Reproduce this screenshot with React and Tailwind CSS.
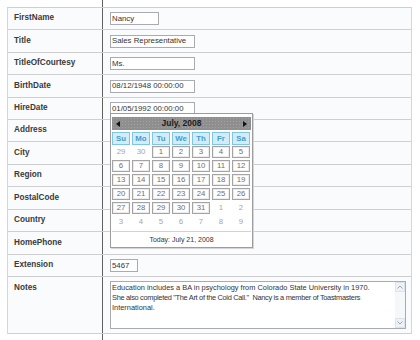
import React from "react";

const rows = [
  { label: "FirstName", h: "h-[22px]", input: "Nancy", w: "w-[49px]" },
  { label: "Title", h: "h-[23px]", input: "Sales Representative", w: "w-[85px]" },
  { label: "TitleOfCourtesy", h: "h-[22px]", input: "Ms.", w: "w-[85px]" },
  { label: "BirthDate", h: "h-[23px]", input: "08/12/1948 00:00:00", w: "w-[85px]" },
  { label: "HireDate", h: "h-[22px]", input: "01/05/1992 00:00:00", w: "w-[85px]" },
  { label: "Address", h: "h-[22px]" },
  { label: "City", h: "h-[23px]" },
  { label: "Region", h: "h-[22px]" },
  { label: "PostalCode", h: "h-[23px]" },
  { label: "Country", h: "h-[22px]" },
  { label: "HomePhone", h: "h-[23px]" },
  { label: "Extension", h: "h-[22px]", input: "5467", w: "w-[28px]" },
];

const weeks = [
  [[29, 0], [30, 0], [1, 1], [2, 1], [3, 1], [4, 1], [5, 1]],
  [[6, 1], [7, 1], [8, 1], [9, 1], [10, 1], [11, 1], [12, 1]],
  [[13, 1], [14, 1], [15, 1], [16, 1], [17, 1], [18, 1], [19, 1]],
  [[20, 1], [21, 1], [22, 1], [23, 1], [24, 1], [25, 1], [26, 1]],
  [[27, 1], [28, 1], [29, 1], [30, 1], [31, 1], [1, 0], [2, 0]],
  [[3, 0], [4, 0], [5, 0], [6, 0], [7, 0], [8, 0], [9, 0]],
];

const dayNames = ["Su", "Mo", "Tu", "We", "Th", "Fr", "Sa"];

function Calendar() {
  return (
    <div className="absolute left-[110px] top-[113px] w-[143px] h-[135px] bg-white border border-[#9c9c9c] shadow-[1px_1px_0_#d6d6d6] pt-[3px] px-[1px] flex flex-col">
      <div className="h-[13px] bg-[#8f8f8f] bg-[radial-gradient(#a3a3a3_0.6px,transparent_0.7px)] bg-[length:3px_3px] flex items-center justify-between px-[4px]">
        <svg width="4" height="6" viewBox="0 0 4 6"><path d="M4 0 L0 3 L4 6 Z" fill="#111" /></svg>
        <span className="text-[8.5px] font-bold text-[#1c1c1c] leading-none">July, 2008</span>
        <svg width="4" height="6" viewBox="0 0 4 6"><path d="M0 0 L4 3 L0 6 Z" fill="#111" /></svg>
      </div>
      <div className="mt-[2px] grid grid-cols-[repeat(7,18px)] gap-x-[2px]">
        {dayNames.map((d) => (
          <div key={d} className="h-[13px] bg-[#d3ecf8] border border-[#7fc5e6] flex items-center justify-center text-[7.8px] font-bold text-[#3f9fcf] leading-none">
            {d}
          </div>
        ))}
      </div>
      <div className="mt-[1px] grid grid-cols-[repeat(7,18px)] gap-x-[2px] gap-y-[2px]">
        {weeks.flat().map(([n, cur], i) => (
          <div
            key={i}
            className={
              cur
                ? "h-[12px] border border-[#a4a4a4] shadow-[inset_0_0_0_1px_#ececec] flex items-center justify-center text-[7.8px] text-[#707070] leading-none"
                : "h-[12px] flex items-center justify-center text-[7.8px] text-[#a6a6a6] leading-none"
            }
          >
            {n}
          </div>
        ))}
      </div>
      <div className="mt-[3px] border-t border-[#d2d2d2] flex-1 flex items-center justify-center text-[7px] text-[#333] leading-none">
        Today: July 21, 2008
      </div>
    </div>
  );
}

function Input({ value, w }) {
  return (
    <div className={`${w} h-[13px] bg-white border border-[#a9abb0] flex items-center pl-[1px] text-[7.8px] text-[#333] leading-none whitespace-nowrap overflow-hidden`}>
      {value}
    </div>
  );
}

export default function App() {
  return (
    <div className="w-[420px] h-[340px] bg-white relative overflow-hidden font-['Liberation_Sans',Arial,sans-serif] flex flex-col">
      <div className="h-[7px] shrink-0 flex">
        <div className="w-[102px]" />
        <div className="w-px bg-[#616161]" />
      </div>
      <div className="ml-[7px] w-[405px] border-l border-r border-l-[#bcdff0] border-r-[#bcdff0] border-t border-t-[#cfcfcf] bg-[#f9fbfd] flex flex-col">
        {rows.map((r) => (
          <div key={r.label} className={`${r.h} flex border-b border-[#cfcfcf]`}>
            <div className="w-[95px] border-r border-[#616161] flex items-center pl-[6px] text-[8.2px] font-bold text-[#3a3a3a]">
              {r.label}
            </div>
            <div className="flex-1 flex items-center pl-[7px]">
              {r.input && <Input value={r.input} w={r.w} />}
            </div>
          </div>
        ))}
        <div className="h-[57px] flex border-b border-[#cfcfcf]">
          <div className="w-[95px] border-r border-[#616161] pl-[6px] pt-[5px] text-[8.2px] font-bold text-[#3a3a3a]">
            Notes
          </div>
          <div className="flex-1 pl-[7px] pt-[4px]">
            <div className="w-[296px] h-[48px] bg-white border border-[#a9abb0] flex">
              <div className="flex-1 pl-[1px] pt-[1px] text-[7.4px] leading-[10px] text-[#333] whitespace-nowrap overflow-hidden">
                <div>Education includes a BA in psychology from Colorado State University in 1970.</div>
                <div className="tracking-[-0.3px]">She also completed "The Art of the Cold Call."&nbsp; Nancy is a member of Toastmasters</div>
                <div>International.</div>
              </div>
              <div className="w-[10px] bg-[#f5f7f9] flex flex-col justify-between">
                <div className="h-[10px] bg-[#eef2f6] border border-[#dde3ea] flex items-center justify-center">
                  <svg width="6" height="4" viewBox="0 0 6 4"><path d="M0.5 3.5 L3 1 L5.5 3.5" fill="none" stroke="#9aa4ae" strokeWidth="1" /></svg>
                </div>
                <div className="h-[10px] bg-[#eef2f6] border border-[#dde3ea] flex items-center justify-center">
                  <svg width="6" height="4" viewBox="0 0 6 4"><path d="M0.5 0.5 L3 3 L5.5 0.5" fill="none" stroke="#9aa4ae" strokeWidth="1" /></svg>
                </div>
              </div>
            </div>
          </div>
        </div>
      </div>
      <div className="flex-1 flex">
        <div className="w-[102px]" />
        <div className="w-px bg-[#616161]" />
      </div>
      <Calendar />
    </div>
  );
}
